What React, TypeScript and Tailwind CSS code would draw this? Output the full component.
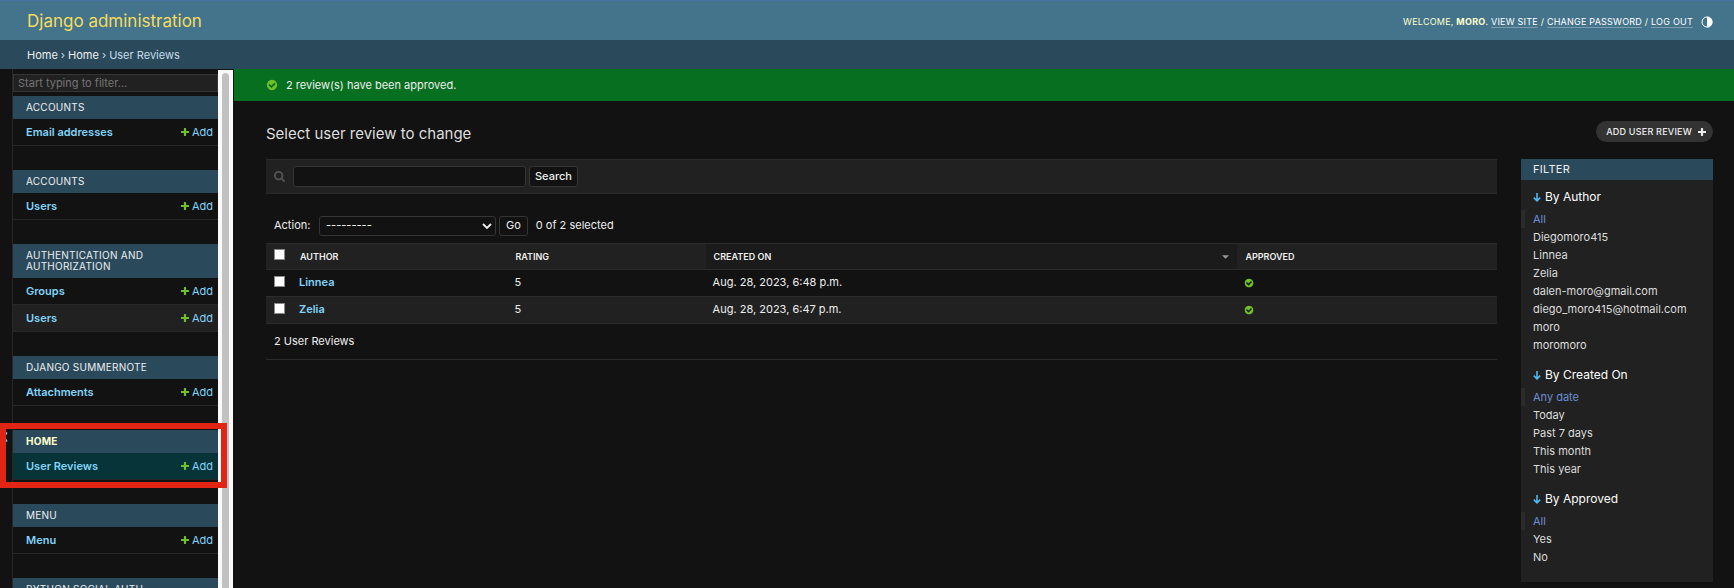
import React from "react";

const PLUS =
  "M1600 796v192q0 40-28 68t-68 28h-416v416q0 40-28 68t-68 28h-192q-40 0-68-28t-28-68v-416h-416q-40 0-68-28t-28-68v-192q0-40 28-68t68-28h416v-416q0-40 28-68t68-28h192q40 0 68 28t28 68v416h416q40 0 68 28t28 68z";
const YES =
  "M1412 734q0-28-18-46l-91-90q-19-19-45-19t-45 19l-408 407-226-226q-19-19-45-19t-45 19l-91 90q-18 18-18 46 0 27 18 45l362 362q19 19 45 19 27 0 46-19l543-543q18-18 18-45zm252 162q0 209-103 385.5t-279.5 279.5-385.5 103-385.5-103-279.5-279.5-103-385.5 103-385.5 279.5-279.5 385.5-103 385.5 103 279.5 279.5 103 385.5z";
const SEARCH =
  "M1216 832q0-185-131.5-316.5t-316.5-131.5-316.5 131.5-131.5 316.5 131.5 316.5 316.5 131.5 316.5-131.5 131.5-316.5zm512 832q0 52-38 90t-90 38q-54 0-90-38l-343-342q-179 124-399 124-143 0-273.5-55.5t-225-150-150-225-55.5-273.5 55.5-273.5 150-225 225-150 273.5-55.5 273.5 55.5 225 150 150 225 55.5 273.5q0 220-124 399l343 343q37 37 37 90z";

function Glyph({ d, className, viewBox = "0 0 1792 1792" }: { d: string; className: string; viewBox?: string }) {
  return (
    <svg viewBox={viewBox} className={className} fill="currentColor" aria-hidden="true">
      <path d={d} />
    </svg>
  );
}

type App = { name: string; models: string[]; current?: boolean };

const apps: App[] = [
  { name: "Accounts", models: ["Email addresses"] },
  { name: "Accounts", models: ["Users"] },
  { name: "Authentication and Authorization", models: ["Groups", "Users"] },
  { name: "Django Summernote", models: ["Attachments"] },
  { name: "Home", models: ["User Reviews"], current: true },
  { name: "Menu", models: ["Menu"] },
  { name: "Python Social Auth", models: [] },
];

const filters = [
  {
    title: "By Author",
    items: ["All", "Diegomoro415", "Linnea", "Zelia", "dalen-moro@gmail.com", "diego_moro415@hotmail.com", "moro", "moromoro"],
  },
  { title: "By Created On", items: ["Any date", "Today", "Past 7 days", "This month", "This year"] },
  { title: "By Approved", items: ["All", "Yes", "No"] },
];

const reviews = [
  { author: "Linnea", rating: 5, created: "Aug. 28, 2023, 6:48 p.m." },
  { author: "Zelia", rating: 5, created: "Aug. 28, 2023, 6:47 p.m." },
];

function Header() {
  const link = "border-b border-white/30 text-white";
  return (
    <header className="flex h-10 shrink-0 items-center justify-between border-t border-[#4872a3] bg-[#44738c] pt-0.5 pr-[21px] pl-[27px]">
      <a href="#" className="text-[17px] text-[#f5dd5d]">
        Django administration
      </a>
      <div className="flex items-center gap-2 text-[9px] leading-3 tracking-wide text-[#ffffcc] uppercase">
        <div>
          Welcome, <strong>moro</strong>.{" "}
          <a href="#" className={link}>View site</a> / <a href="#" className={link}>Change password</a> /{" "}
          <a href="#" className={link}>Log out</a>
        </div>
        <button type="button" aria-label="Toggle theme" className="text-white">
          <svg viewBox="0 0 12 12" className="size-3" aria-hidden="true">
            <circle cx="6" cy="6" r="5" fill="none" stroke="currentColor" strokeWidth="1" />
            <path d="M6 0.5a5.5 5.5 0 0 1 0 11z" fill="currentColor" />
          </svg>
        </button>
      </div>
    </header>
  );
}

function Breadcrumbs() {
  return (
    <nav aria-label="Breadcrumbs" className="flex h-[29px] shrink-0 items-center gap-[3px] bg-[#2a4a5c] px-[27px] pt-0.5 text-[11px] text-[#c4dce8]">
      <a href="#" className="text-[#eeeeee]">Home</a>
      <span>›</span>
      <a href="#" className="text-[#eeeeee]">Home</a>
      <span>›</span>
      <span>User Reviews</span>
    </nav>
  );
}

function AppModule({ app }: { app: App }) {
  return (
    <section className="relative mb-6">
      <h2
        className={
          "bg-[#2a4a5c] px-[13px] py-1.5 text-[10px] leading-[11px] tracking-wide uppercase " +
          (app.current ? "font-bold text-[#ffffcc]" : "text-[#eeeeee]")
        }
      >
        {app.name}
      </h2>
      <ul>
        {app.models.map((m, i) => (
          <li
            key={m}
            className={
              "flex h-[27px] items-center justify-between border-b border-[#272727] pr-[5px] pl-[13px] text-[11px] " +
              (app.current ? "bg-[#063438]" : i % 2 ? "bg-[#212121]" : "")
            }
          >
            <a href="#" className="font-semibold text-[#81d4fa]">{m}</a>
            <a href="#" className="flex items-center gap-[3px] text-[#81d4fa]">
              <Glyph d={PLUS} viewBox="192 188 1408 1408" className="size-2 text-[#70bf2b]" />
              Add
            </a>
          </li>
        ))}
      </ul>
      {app.current && (
        <div className="pointer-events-none absolute -top-[7px] -right-[9px] -bottom-2 -left-[13px] border-6 border-[#e02514]" />
      )}
    </section>
  );
}

function Sidebar() {
  return (
    <div className="flex shrink-0">
      <button type="button" aria-label="Toggle navigation" className="flex w-[13px] items-center border-r border-[#272727] pt-[217px] pl-[3px]">
        <svg viewBox="0 0 6 12" className="h-3 w-1.5 text-[#81d4fa]" aria-hidden="true">
          <path d="M4 1.5 1 6l3 4.5" fill="none" stroke="currentColor" strokeWidth="1.4" />
        </svg>
      </button>
      <nav aria-label="Sidebar" className="w-[205px] pt-[5px]">
        <input
          type="search"
          aria-label="Filter navigation items by name"
          placeholder="Start typing to filter…"
          className="mb-1 block h-[18px] w-full border border-[#353535] bg-[#212121] px-1 text-[11px] placeholder:text-[#757575]"
        />
        {apps.map((a, i) => (
          <AppModule key={i} app={a} />
        ))}
      </nav>
      <div className="mt-px mr-px w-[15px] bg-[#fafafa] px-1 pt-[3px]">
        <div className="h-full rounded-t-full bg-[#c1c1c1]" />
      </div>
    </div>
  );
}

const field = "rounded-[3px] border border-[#353535] bg-[#121212]";

function Toolbar() {
  return (
    <form className="flex h-[35px] items-center border-y border-[#2b2b2b] bg-[#212121] px-2" onSubmit={(e) => e.preventDefault()}>
      <label htmlFor="searchbar" className="mr-2" aria-label="Search reviews">
        <Glyph d={SEARCH} viewBox="64 128 1664 1664" className="size-[11px] text-[#555555]" />
      </label>
      <input id="searchbar" type="text" aria-label="Search reviews" className={field + " mr-[3px] h-[21px] w-[233px] px-1"} />
      <button type="submit" className={field + " h-[21px] px-[5px] font-medium"}>Search</button>
    </form>
  );
}

function Actions() {
  return (
    <div className="mt-3.5 flex h-[35px] items-center px-2">
      <label htmlFor="action" className="w-[45px]">Action:</label>
      <div className="relative mr-[3px]">
        <select id="action" className={field + " block h-5 w-[177px] appearance-none px-1.5 font-medium"}>
          <option>---------</option>
        </select>
        <svg viewBox="0 0 10 6" className="pointer-events-none absolute top-[7px] right-1 h-1.5 w-2.5" aria-hidden="true">
          <path d="M1 1l4 4 4-4" fill="none" stroke="#eeeeee" strokeWidth="1.8" />
        </svg>
      </div>
      <button type="button" className={field + " mr-2 h-5 px-1.5"}>Go</button>
      <span>0 of 2 selected</span>
    </div>
  );
}

function Check({ label }: { label: string }) {
  return <input type="checkbox" aria-label={label} className="block size-[11px] appearance-none border border-[#8a8a8a] bg-white" />;
}

function Results() {
  const th = "px-2 text-left text-[9px] font-semibold uppercase";
  return (
    <table className="w-full table-fixed border-collapse">
      <colgroup>
        <col className="w-[26px]" />
        <col className="w-[17.5%]" />
        <col className="w-[16.1%]" />
        <col className="w-[43.2%]" />
        <col />
      </colgroup>
      <thead>
        <tr className="h-[26px] border-y border-[#2b2b2b] bg-[#212121]">
          <th className="px-2 pb-1"><Check label="Select all" /></th>
          <th className={th}>Author</th>
          <th className={th}>Rating</th>
          <th className={th + " bg-[#1b1b1b]"}>
            <div className="flex items-center justify-between">
              Created on
              <svg viewBox="0 0 8 4" className="h-1 w-[7px]" aria-label="Sorted descending">
                <path d="M0 0h8L4 4z" fill="#999999" />
              </svg>
            </div>
          </th>
          <th className={th}>Approved</th>
        </tr>
      </thead>
      <tbody>
        {reviews.map((r) => (
          <tr key={r.author} className="h-[27px] border-b border-[#2b2b2b] even:bg-[#212121]">
            <td className="px-2 pb-1"><Check label={"Select " + r.author} /></td>
            <th scope="row" className="px-[7px] pb-px text-left font-semibold">
              <a href="#" className="text-[#81d4fa]">{r.author}</a>
            </th>
            <td className="px-[7px] pb-px">{r.rating}</td>
            <td className="px-[7px] pb-px">{r.created}</td>
            <td className="px-[7px]">
              <Glyph d={YES} className="size-2.5 text-[#70bf2b]" />
            </td>
          </tr>
        ))}
      </tbody>
    </table>
  );
}

function FilterPanel() {
  return (
    <aside className="w-48 shrink-0 bg-[#212121] pb-3">
      <h2 className="bg-[#2a4a5c] px-3 text-[11px] leading-[21px] tracking-wide text-[#eeeeee] uppercase">Filter</h2>
      {filters.map((f) => (
        <details key={f.title} open className="pt-2 pb-1">
          <summary className="flex items-center gap-1 px-3 text-xs leading-[18px] text-white">
            <svg viewBox="0 0 8 9" className="h-[9px] w-2" aria-hidden="true">
              <path d="M4 0v8M0.8 4.6l3.2 3.2 3.2-3.2" fill="none" stroke="#4fb7ee" strokeWidth="1.6" />
            </svg>
            {f.title}
          </summary>
          <ul className="pt-1">
            {f.items.map((t, i) => (
              <li key={t} className={"border-l-4 pl-2 leading-[18px] " + (i === 0 ? "border-[#2b2b2b]" : "border-transparent")}>
                <a href="#" className={i === 0 ? "text-[#6b8fd4]" : "text-[#dddddd]"}>{t}</a>
              </li>
            ))}
          </ul>
        </details>
      ))}
    </aside>
  );
}

export default function App() {
  return (
    <div className="flex h-screen flex-col overflow-hidden bg-[#121212] font-['Inter',sans-serif] text-[11px] text-[#eeeeee]">
      <Header />
      <Breadcrumbs />
      <div className="flex min-h-0 flex-1">
        <Sidebar />
        <main className="min-w-0 flex-1">
          <p className="flex h-8 items-center gap-2 bg-[#066f20] px-8">
            <Glyph d={YES} className="size-3 text-[#70bf2b]" />
            2 review(s) have been approved.
          </p>
          <div className="pt-5 pr-[21px] pl-8">
            <div className="mb-3 flex items-start justify-between">
              <h1 className="text-[15px] leading-[26px] text-[#dddddd]">Select user review to change</h1>
              <a href="#" className="flex h-[21px] items-center gap-1.5 rounded-full bg-[#333333] pr-[7px] pl-2.5 text-[9px] font-medium tracking-wide uppercase">
                Add user review
                <Glyph d={PLUS} viewBox="192 188 1408 1408" className="size-2" />
              </a>
            </div>
            <div className="flex items-start gap-6">
              <div className="min-w-0 flex-1">
                <Toolbar />
                <Actions />
                <Results />
                <p className="border-b border-[#2b2b2b] px-2 leading-[35px]">2 User Reviews</p>
              </div>
              <FilterPanel />
            </div>
          </div>
        </main>
      </div>
    </div>
  );
}
